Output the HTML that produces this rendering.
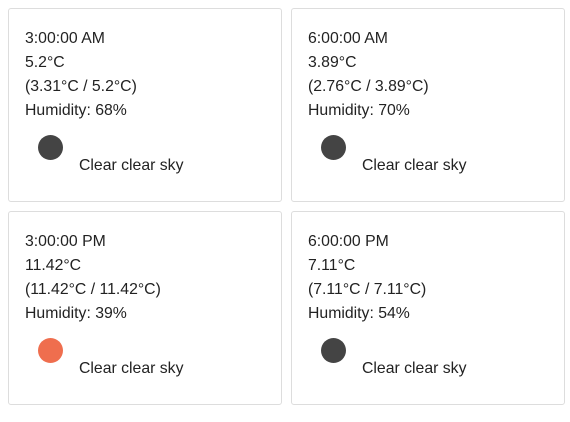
<!DOCTYPE html>
<html><head><style>
body{margin:0;width:570px;height:422px;background:#fff;font-family:"Liberation Sans",Arial,sans-serif;font-size:15.8px;color:#222;position:relative;overflow:hidden}
.c{position:absolute;width:274px;height:194px;border:1px solid #ddd;border-radius:3px;box-sizing:border-box}
.t{position:absolute;left:16px;top:18px;line-height:24px}
.d{position:absolute;left:29px;width:25px;height:25px;border-radius:50%;background:#444;top:126px}
.s{position:absolute;left:70px;top:146px;line-height:22px}
</style></head><body>
<div class="c" style="left:8px;top:8px"><div class="t">3:00:00 AM<br>5.2°C<br>(3.31°C / 5.2°C)<br>Humidity: 68%</div><div class="d"></div><div class="s">Clear clear sky</div></div>
<div class="c" style="left:291px;top:8px"><div class="t">6:00:00 AM<br>3.89°C<br>(2.76°C / 3.89°C)<br>Humidity: 70%</div><div class="d"></div><div class="s">Clear clear sky</div></div>
<div class="c" style="left:8px;top:211px"><div class="t">3:00:00 PM<br>11.42°C<br>(11.42°C / 11.42°C)<br>Humidity: 39%</div><div class="d" style="background:#ef6e4e"></div><div class="s">Clear clear sky</div></div>
<div class="c" style="left:291px;top:211px"><div class="t">6:00:00 PM<br>7.11°C<br>(7.11°C / 7.11°C)<br>Humidity: 54%</div><div class="d"></div><div class="s">Clear clear sky</div></div>
</body></html>
